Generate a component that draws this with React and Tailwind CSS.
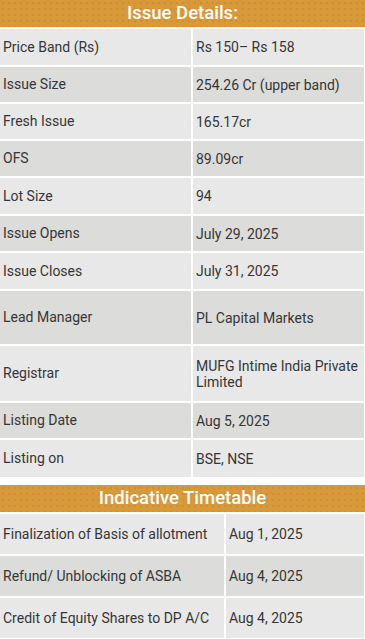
const details = [
  ["Price Band (Rs)", "Rs 150– Rs 158", "h-[36px]"],
  ["Issue Size", "254.26 Cr (upper band)", "h-[35px]"],
  ["Fresh Issue", "165.17cr", "h-[35px]"],
  ["OFS", "89.09cr", "h-[35px]"],
  ["Lot Size", "94", "h-[36px]"],
  ["Issue Opens", "July 29, 2025", "h-[35px]"],
  ["Issue Closes", "July 31, 2025", "h-[36px]"],
  ["Lead Manager", "PL Capital Markets", "h-[53px]"],
  ["Registrar", "MUFG Intime India Private Limited", "h-[55px]"],
  ["Listing Date", "Aug 5, 2025", "h-[35px]"],
  ["Listing on", "BSE, NSE", "h-[37px]"],
];

const timetable = [
  ["Finalization of Basis of allotment", "Aug 1, 2025"],
  ["Refund/ Unblocking of ASBA", "Aug 4, 2025"],
  ["Credit of Equity Shares to DP A/C", "Aug 4, 2025"],
];

const Header = ({ children }) => (
  <div className="h-[27px] flex items-center justify-center bg-[#d8993a] bg-[radial-gradient(circle,rgba(160,100,30,0.3)_0.6px,transparent_0.9px)] bg-[length:6px_6px] text-white text-[18.5px] font-medium leading-none">
    {children}
  </div>
);

export default function App() {
  return (
    <div className="w-[365px] h-[639px] overflow-hidden bg-white text-[#363636] text-[14px] font-['Roboto',sans-serif]">
      <Header>Issue Details:</Header>
      <div className="flex flex-col gap-[2px] mt-[2px] pr-[1px]">
        {details.map(([label, value, h], i) => (
          <div key={label} className={`flex gap-[2px] ${h}`}>
            <div className={`w-[191px] flex items-center pl-[3px] ${i % 2 ? "bg-[#dcdcda]" : "bg-[#e8e8e8]"}`}>
              {label}
            </div>
            <div className={`flex-1 flex items-center pl-[3px] pr-[2px] leading-[16px] ${i % 2 ? "bg-[#dcdcda]" : "bg-[#e8e8e8]"}`}>
              {value}
            </div>
          </div>
        ))}
      </div>

      <div className="mt-[8px]">
        <Header>Indicative Timetable</Header>
      </div>
      <div className="flex flex-col gap-[2px] mt-[2px] pr-[1px]">
        {timetable.map(([label, value], i) => (
          <div key={label} className="flex gap-[2px] h-[40px]">
            <div className={`w-[224px] flex items-center pl-[3px] ${i % 2 ? "bg-[#dcdcda]" : "bg-[#e8e8e8]"}`}>
              {label}
            </div>
            <div className={`flex-1 flex items-center pl-[3px] ${i % 2 ? "bg-[#dcdcda]" : "bg-[#e8e8e8]"}`}>
              {value}
            </div>
          </div>
        ))}
      </div>
    </div>
  );
}
